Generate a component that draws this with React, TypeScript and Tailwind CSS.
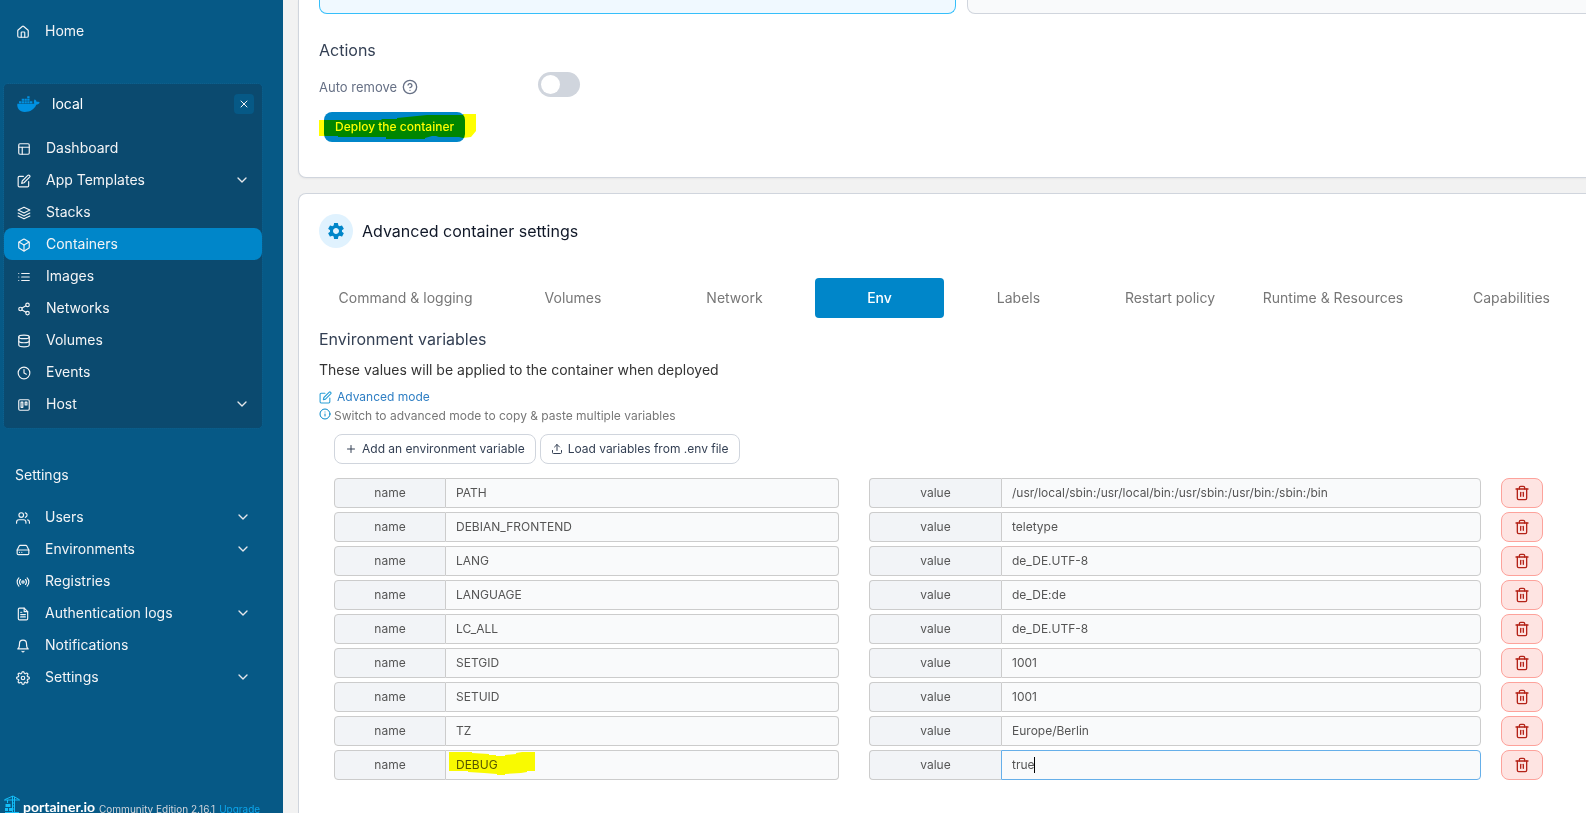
import React, { useState } from 'react'
import type { IconType } from 'react-icons'
import { FaDocker } from 'react-icons/fa'
import {
  FiBell,
  FiBox,
  FiChevronDown,
  FiClock,
  FiDatabase,
  FiEdit,
  FiFileText,
  FiHardDrive,
  FiHelpCircle,
  FiInfo,
  FiLayers,
  FiLayout,
  FiList,
  FiPlus,
  FiRadio,
  FiSettings,
  FiShare2,
  FiTrash2,
  FiTrello,
  FiUpload,
  FiUsers,
  FiX,
} from 'react-icons/fi'
import { MdSettings } from 'react-icons/md'
import { House } from 'lucide-react'

interface MenuItem {
  label: string
  icon: IconType
  expandable?: boolean
}

interface EnvVar {
  name: string
  value: string
}

const environmentMenu: MenuItem[] = [
  { label: 'Dashboard', icon: FiLayout },
  { label: 'App Templates', icon: FiEdit, expandable: true },
  { label: 'Stacks', icon: FiLayers },
  { label: 'Containers', icon: FiBox },
  { label: 'Images', icon: FiList },
  { label: 'Networks', icon: FiShare2 },
  { label: 'Volumes', icon: FiDatabase },
  { label: 'Events', icon: FiClock },
  { label: 'Host', icon: FiTrello, expandable: true },
]

const settingsMenu: MenuItem[] = [
  { label: 'Users', icon: FiUsers, expandable: true },
  { label: 'Environments', icon: FiHardDrive, expandable: true },
  { label: 'Registries', icon: FiRadio },
  { label: 'Authentication logs', icon: FiFileText, expandable: true },
  { label: 'Notifications', icon: FiBell },
  { label: 'Settings', icon: FiSettings, expandable: true },
]

const tabs = [
  'Command & logging',
  'Volumes',
  'Network',
  'Env',
  'Labels',
  'Restart policy',
  'Runtime & Resources',
  'Capabilities',
]

const initialVars: EnvVar[] = [
  { name: 'PATH', value: '/usr/local/sbin:/usr/local/bin:/usr/sbin:/usr/bin:/sbin:/bin' },
  { name: 'DEBIAN_FRONTEND', value: 'teletype' },
  { name: 'LANG', value: 'de_DE.UTF-8' },
  { name: 'LANGUAGE', value: 'de_DE:de' },
  { name: 'LC_ALL', value: 'de_DE.UTF-8' },
  { name: 'SETGID', value: '1001' },
  { name: 'SETUID', value: '1001' },
  { name: 'TZ', value: 'Europe/Berlin' },
  { name: 'DEBUG', value: 'true' },
]

const SidebarLink: React.FC<{ item: MenuItem; active?: boolean }> = ({ item, active }) => {
  const Icon = item.icon
  return (
    <a
      href="#"
      className={`flex h-8 items-center rounded-lg pl-[13px] pr-3 text-sm text-gray-100 ${active ? 'bg-[#0086c9]' : ''}`}
    >
      <Icon className="mt-0.5 h-3.5 w-3.5" />
      <span className="ml-[15px] flex-1">{item.label}</span>
      {item.expandable && <FiChevronDown className="h-4 w-4 text-gray-200" />}
    </a>
  )
}

const PortainerMark = () => (
  <svg className="h-6 w-4" viewBox="0 0 16 24" fill="none" stroke="#13bef9" strokeWidth="1">
    <path d="M0 5h16M1 4.5l8-3.5 6 3.5M8.5 1v19M10.5 2v18M8.5 8h2M8.5 11h2M8.5 14h2M3.5 5v3" />
    <path d="M1.5 9h5v3h-5zM1 13h3v3H1zM5 13h3v3H5zM1 17h14v4H1z" fill="#13bef9" stroke="none" />
  </svg>
)

const Sidebar = () => (
  <aside className="flex w-[283px] shrink-0 flex-col bg-[#065986] pl-1 pr-[21px]">
    <a href="#" className="mt-[15px] flex h-8 shrink-0 items-center pl-3 text-sm text-gray-100">
      <House className="mt-0.5 h-3.5 w-3.5" />
      <span className="ml-[15px]">Home</span>
    </a>

    <div className="mt-[37px] rounded bg-[#0b4a6f] pb-2 pt-2.5 outline outline-dotted outline-[#0e5f8c]">
      <div className="mb-[18px] flex h-5 items-center pl-[13px] pr-2">
        <FaDocker className="h-[18px] w-[23px] text-[#0091e2]" />
        <span className="ml-3 flex-1 text-sm text-white">local</span>
        <button type="button" aria-label="Close environment" className="flex h-5 w-5 items-center justify-center rounded bg-[#065986]">
          <FiX className="h-3 w-3 text-gray-100" />
        </button>
      </div>
      <nav aria-label="local">
        {environmentMenu.map((item) => (
          <SidebarLink key={item.label} item={item} active={item.label === 'Containers'} />
        ))}
      </nav>
    </div>

    <h2 className="mt-[37px] pl-[11px] text-sm leading-5 text-gray-100">Settings</h2>
    <nav aria-label="Settings" className="-mx-px mt-4">
      {settingsMenu.map((item) => (
        <SidebarLink key={item.label} item={item} />
      ))}
    </nav>

    <div className="mt-[102px] flex h-6 shrink-0 items-center whitespace-nowrap">
      <PortainerMark />
      <span className="ml-[3px] font-[Lato] text-sm font-bold text-white">portainer.io</span>
      <span className="ml-1 mt-1 text-[10px] text-gray-300">Community Edition 2.16.1</span>
      <a href="#" className="ml-1 mt-1 text-[10px] text-[#0ba5ec]">Upgrade</a>
    </div>
  </aside>
)

// Marker strokes lying over the deploy button and the DEBUG name
const DeployMarker = () => (
  <svg className="pointer-events-none absolute -left-[5px] top-0 h-[30px] w-[160px] mix-blend-multiply" viewBox="0 0 160 30" fill="#ffff00">
    <path d="M0 8H62L63 7H78V6L108 3H144V2H157V19L152 25L144 26L140 25H120L117 24H113L106 26V27H67V25H19V24H0Z" />
  </svg>
)

const NameMarker = () => (
  <svg className="pointer-events-none absolute left-[3px] top-0.5 h-[26px] w-[86px] mix-blend-multiply" viewBox="0 0 86 26" fill="#ffff00">
    <path d="M0 0H23V1L40 2V3H47V4H56V3L67 2V1L73 0H86V19H78V20L72 21L56 22V23H48V22L35 21L19 20V19H0Z" />
  </svg>
)

const CreateContainerPanel = () => {
  const [autoRemove, setAutoRemove] = useState(false)

  return (
    <section className="rounded-b-lg border border-t-0 border-[#d0d5dd] bg-white px-5 pb-[35px] shadow-xs">
      <div className="grid h-3.5 grid-cols-2 gap-[11px]">
        <div className="rounded-b-lg border border-t-0 border-[#36bffa] bg-[#f0f9ff]" />
        <div className="rounded-b-lg border border-t-0 border-[#d0d5dd] bg-[#f9fafb]" />
      </div>
      <h3 className="mt-6 text-base text-[#344054]">Actions</h3>
      <div className="mt-2.5 flex h-[25px] items-center">
        <label htmlFor="auto-remove" className="flex w-[219px] items-center gap-[5px] pt-1 text-[13px] leading-5 text-[#667085]">
          Auto remove
          <FiHelpCircle className="h-4 w-4" />
        </label>
        <input
          id="auto-remove"
          type="checkbox"
          role="switch"
          checked={autoRemove}
          onChange={(e) => setAutoRemove(e.target.checked)}
          className="h-[25px] w-[42px] appearance-none rounded-full bg-[#d0d5dd] p-[3px] before:block before:h-[19px] before:w-[19px] before:rounded-full before:bg-white checked:bg-[#0086c9] checked:before:ml-auto"
        />
      </div>
      <div className="relative ml-[5px] mt-[15px] w-fit">
        <button type="button" className="flex h-[30px] items-center rounded-lg bg-[#0086c9] px-[11px] text-xs font-medium text-white">
          Deploy the container
        </button>
        <DeployMarker />
      </div>
    </section>
  )
}

const EnvRow: React.FC<{
  index: number
  item: EnvVar
  onChange: (item: EnvVar) => void
  onRemove: () => void
}> = ({ index, item, onChange, onRemove }) => {
  const highlighted = item.name === 'DEBUG'

  return (
    <div className="flex h-[30px] text-xs text-[#555555]">
      <div className="mr-[30px] flex min-w-0 flex-[505]">
        <label htmlFor={`name-${index}`} className="flex w-28 shrink-0 items-center justify-center rounded-l border border-[#cccccc] bg-[#f2f4f7]">
          name
        </label>
        <div className="relative flex-1">
          <input
            id={`name-${index}`}
            type="text"
            value={item.name}
            onChange={(e) => onChange({ ...item, name: e.target.value })}
            className="h-full w-full rounded-r border border-l-0 border-[#cccccc] bg-[#f9fafb] px-2.5 pb-0.5 outline-none"
          />
          {highlighted && <NameMarker />}
        </div>
      </div>
      <div className="mr-5 flex min-w-0 flex-[612]">
        <label htmlFor={`value-${index}`} className="flex w-[132px] shrink-0 items-center justify-center rounded-l border border-r-0 border-[#cccccc] bg-[#f2f4f7]">
          value
        </label>
        <div className="relative flex-1">
          <input
            id={`value-${index}`}
            type="text"
            value={item.value}
            onChange={(e) => onChange({ ...item, value: e.target.value })}
            className={`h-full w-full rounded-r border bg-[#f9fafb] px-2.5 pb-0.5 outline-none ${highlighted ? 'border-[#66afe9]' : 'border-[#cccccc]'}`}
          />
          {highlighted && <span className="absolute left-[33px] top-[7px] h-4 w-px bg-black" />}
        </div>
      </div>
      <button
        type="button"
        aria-label={`Remove ${item.name}`}
        onClick={onRemove}
        className="flex w-[42px] shrink-0 items-center justify-center rounded-lg border border-[#fda29b] bg-[#fee4e2] text-[#b42318]"
      >
        <FiTrash2 className="h-4 w-4" />
      </button>
    </div>
  )
}

const AdvancedSettingsPanel = () => {
  const [activeTab, setActiveTab] = useState('Env')
  const [vars, setVars] = useState<EnvVar[]>(initialVars)

  const updateVar = (index: number, item: EnvVar) => {
    setVars(vars.map((v, i) => (i === index ? item : v)))
  }

  const removeVar = (index: number) => {
    setVars(vars.filter((_, i) => i !== index))
  }

  return (
    <section className="mt-[15px] flex-1 rounded-t-lg border border-b-0 border-[#d0d5dd] bg-white px-5 pb-12 pt-5">
      <div className="flex items-center gap-[9px]">
        <span className="flex h-[34px] w-[34px] items-center justify-center rounded-full bg-[#e0f2fe]">
          <MdSettings className="h-5 w-5 text-[#0086c9]" />
        </span>
        <h2 className="text-base text-[#101828]">Advanced container settings</h2>
      </div>

      <div role="tablist" className="mt-[30px] grid grid-cols-[173fr_162fr_161fr_129fr_149fr_154fr_172fr_185fr]">
        {tabs.map((tab) => (
          <button
            key={tab}
            type="button"
            role="tab"
            aria-selected={tab === activeTab}
            onClick={() => setActiveTab(tab)}
            className={`h-10 whitespace-nowrap rounded text-sm ${tab === activeTab ? 'bg-[#0086c9] font-medium text-white' : 'text-[#777777]'}`}
          >
            {tab}
          </button>
        ))}
      </div>

      <h3 className="mt-[9px] text-base text-[#344054]">Environment variables</h3>
      <p className="mt-[9px] text-sm text-[#333333]">These values will be applied to the container when deployed</p>

      <a href="#" className="mt-2 flex h-[18px] items-center gap-[5px] text-xs text-[#2f7fc4]">
        <FiEdit className="h-[13px] w-[13px] text-[#2a9fd6]" />
        Advanced mode
      </a>
      <p className="flex h-5 items-center gap-[3px] text-xs text-[#777777]">
        <FiInfo className="mb-1 h-3 w-3 text-[#0086c9]" />
        Switch to advanced mode to copy &amp; paste multiple variables
      </p>

      <div className="mt-2 flex gap-1 pl-[15px] text-xs text-[#344054]">
        <button type="button" className="flex h-[30px] items-center gap-[5px] rounded-lg border border-[#d0d5dd] px-2.5">
          <FiPlus className="h-3 w-3" />
          Add an environment variable
        </button>
        <button type="button" className="flex h-[30px] items-center gap-[5px] rounded-lg border border-[#d0d5dd] px-2.5">
          <FiUpload className="h-3 w-3" />
          Load variables from .env file
        </button>
      </div>

      <div className="mt-3.5 flex flex-col gap-1 pl-[15px] pr-[61px]">
        {vars.map((item, index) => (
          <EnvRow
            key={index}
            index={index}
            item={item}
            onChange={(next) => updateVar(index, next)}
            onRemove={() => removeVar(index)}
          />
        ))}
      </div>
    </section>
  )
}

export default function App() {
  return (
    <div className="flex h-screen overflow-hidden bg-[#f2f2f2] font-[Inter,sans-serif]">
      <Sidebar />
      <main className="min-w-0 flex-1 overflow-hidden pl-[15px]">
        <div className="-mr-[39px] flex min-h-full flex-col">
          <CreateContainerPanel />
          <AdvancedSettingsPanel />
        </div>
      </main>
    </div>
  )
}
